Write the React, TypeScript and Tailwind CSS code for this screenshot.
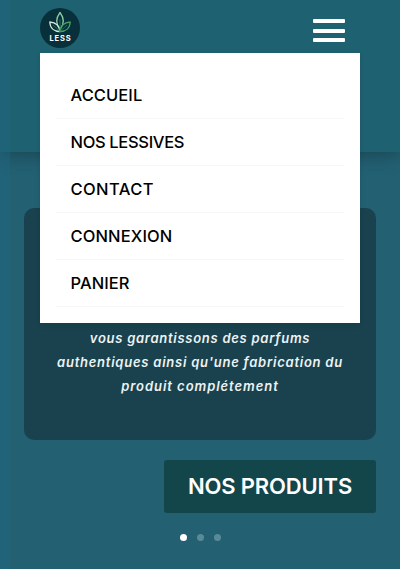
import React from "react";

const links = [
  { label: "ACCUEIL", tracking: "tracking-[0.08px]" },
  { label: "NOS LESSIVES", tracking: "tracking-[-0.33px]" },
  { label: "CONTACT", tracking: "tracking-[0.4px]" },
  { label: "CONNEXION", tracking: "tracking-[0.12px]" },
  { label: "PANIER", tracking: "tracking-[0.08px]" },
];

function Logo() {
  return (
    <div className="flex size-10 flex-col items-center rounded-full bg-[#07303a] pt-[3px]">
      <svg width="24" height="22" viewBox="0 0 24 22" fill="none" strokeWidth="1.3" strokeLinejoin="round">
        <path d="M12 18C7.500 13 8 7 12 1.500C16 7 16.500 13 12 18Z" stroke="#8fc8a4" />
        <path d="M12 20.500C11.500 15 8 11.500 1.800 11C2 17 6 20.500 12 20.500Z" stroke="#d2e5dc" />
        <path d="M12 20.500C12.500 15 16 11.500 22.200 11C22 17 18 20.500 12 20.500Z" stroke="#48a066" />
        <path d="M12 20V8M5 14L12 20.500L19 14" stroke="#237a53" strokeWidth="0.8" />
      </svg>
      <span className="mt-[2px] pl-px text-[7.500px] leading-[8px] font-bold tracking-[0.8px] text-white">LESS</span>
    </div>
  );
}

export default function App() {
  return (
    <div className="relative flex h-[569px] w-[400px] flex-col overflow-hidden bg-[#226072] font-['Inter',sans-serif]">
      <header className="relative z-10 h-[152px] shrink-0 bg-[#1e6170] shadow-[0_2px_18px_rgba(0,0,0,0.3)]">
        <div className="flex justify-between px-10 pt-2">
          <Logo />
          <button aria-label="Menu" className="mt-[11px] mr-[15px] flex h-[23px] w-8 flex-col justify-between">
            <span className="h-1 w-full rounded-[1px] bg-white" />
            <span className="h-1 w-full rounded-[1px] bg-white" />
            <span className="h-1 w-full rounded-[1px] bg-white" />
          </button>
        </div>
        <nav className="absolute top-[53px] left-10 h-[270px] w-80 bg-white px-4 pt-[19px] shadow-[0_2px_5px_rgba(0,0,0,0.1)]">
          <ul>
            {links.map((l) => (
              <li key={l.label} className="flex h-[47px] items-center border-b border-[#f7f7f7] pl-[14.500px] text-[16.500px] font-[540] text-black">
                <span className={l.tracking}>{l.label}</span>
              </li>
            ))}
          </ul>
        </nav>
      </header>
      <main className="flex flex-col px-6 pt-14">
        <section className="flex h-[232px] flex-col items-center rounded-[10px] bg-[#19424e] pt-[118px] text-[13px] leading-6 font-[560] whitespace-nowrap text-[#edf3f4] italic">
          <span className="tracking-[0.73px]">vous garantissons des parfums</span>
          <span className="tracking-[0.76px]">authentiques ainsi qu'une fabrication du</span>
          <span className="tracking-[0.95px]">produit complétement</span>
        </section>
        <a className="mt-5 flex h-[53px] w-[212px] items-center justify-center self-end rounded-[3px] bg-[#12464b] text-[22px] font-[580] whitespace-nowrap text-white">
          <span className="tracking-[-0.15px]">NOS PRODUITS</span>
        </a>
        <div className="mt-[21px] flex justify-center gap-[10px]">
          <span className="size-[7px] rounded-full bg-white" />
          <span className="size-[7px] rounded-full bg-[#598a97]" />
          <span className="size-[7px] rounded-full bg-[#598a97]" />
        </div>
      </main>
      <div className="pointer-events-none absolute inset-y-0 left-0 z-20 w-[10px] bg-[#216a8c]/30" />
    </div>
  );
}
